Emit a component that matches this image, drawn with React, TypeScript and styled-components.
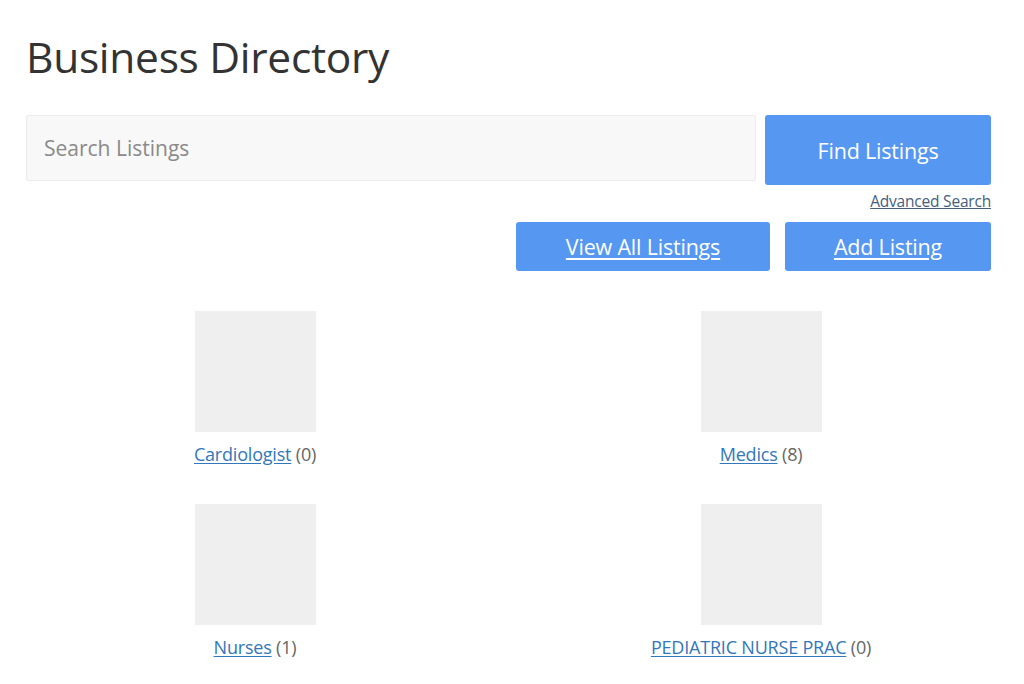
import React from "react";
import styled, { createGlobalStyle } from "styled-components";

const Global = createGlobalStyle`
  html, body { margin: 0; padding: 0; background: #ffffff; }
  body { font-family: "Open Sans", "Noto Sans", sans-serif; color: #333; }
  * { box-sizing: border-box; }
`;

const Page = styled.div`
  width: 1024px;
  padding: 27px 33px 0 26px;
`;

const Title = styled.h1`
  margin: 0 0 28px 0;
  font-weight: 400;
  font-size: 42.5px;
  line-height: 60px;
  color: #333333;
  letter-spacing: -0.3px;
`;

const SearchRow = styled.div`
  display: flex;
  gap: 9px;
  align-items: flex-start;
`;

const SearchInput = styled.input`
  flex: 1;
  height: 66px;
  background: #f8f8f8;
  border: 1px solid #ececec;
  border-radius: 2px;
  padding: 0 17px;
  font-family: inherit;
  font-size: 21px;
  color: #333;
  outline: none;
  &::placeholder { color: #8a8a8a; }
`;

const Button = styled.a<{ $w: number; $h: number }>`
  display: flex;
  align-items: center;
  justify-content: center;
  width: ${(p) => p.$w}px;
  height: ${(p) => p.$h}px;
  background: #5597f1;
  color: #ffffff;
  border-radius: 3px;
  font-size: 21.5px;
  letter-spacing: -0.2px;
  cursor: pointer;
`;

const FindButton = styled(Button)`
  text-decoration: none;
`;

const LinkButton = styled(Button)`
  text-decoration: underline;
  text-underline-offset: 3px;
`;

const AdvancedRow = styled.div`
  display: flex;
  justify-content: flex-end;
  margin-top: 5px;
`;

const Advanced = styled.a`
  font-size: 15.5px;
  color: #44607e;
  text-decoration: underline;
  line-height: 22px;
  letter-spacing: -0.2px;
`;

const ActionRow = styled.div`
  display: flex;
  justify-content: flex-end;
  gap: 15px;
  margin-top: 10px;
`;

const Grid = styled.div`
  display: grid;
  grid-template-columns: 1fr 1fr;
  margin: 40px -23px 0 -24px;
  row-gap: 38px;
`;

const Cell = styled.div`
  display: flex;
  flex-direction: column;
  align-items: center;
`;

const Thumb = styled.div`
  width: 121px;
  height: 121px;
  background: #efefef;
`;

const Label = styled.div`
  margin-top: 10px;
  font-size: 18px;
  line-height: 24px;
  color: #666;
  letter-spacing: -0.2px;
`;

const CatLink = styled.a`
  color: #3277ba;
  text-decoration: underline;
  text-underline-offset: 2px;
`;

const categories = [
  { name: "Cardiologist", count: 0 },
  { name: "Medics", count: 8 },
  { name: "Nurses", count: 1 },
  { name: "PEDIATRIC NURSE PRAC", count: 0 },
];

export default function App() {
  return (
    <>
      <Global />
      <Page>
        <Title>Business Directory</Title>
        <SearchRow>
          <SearchInput placeholder="Search Listings" />
          <FindButton $w={226} $h={70}>Find Listings</FindButton>
        </SearchRow>
        <AdvancedRow>
          <Advanced>Advanced Search</Advanced>
        </AdvancedRow>
        <ActionRow>
          <LinkButton $w={254} $h={49}>View All Listings</LinkButton>
          <LinkButton $w={206} $h={49}>Add Listing</LinkButton>
        </ActionRow>
        <Grid>
          {categories.map((c) => (
            <Cell key={c.name}>
              <Thumb />
              <Label>
                <CatLink>{c.name}</CatLink> ({c.count})
              </Label>
            </Cell>
          ))}
        </Grid>
      </Page>
    </>
  );
}
